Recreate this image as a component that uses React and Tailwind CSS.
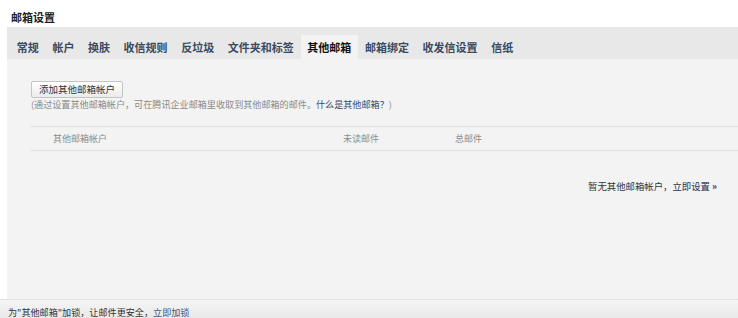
const tabs = ['常规', '帐户', '换肤', '收信规则', '反垃圾', '文件夹和标签', '其他邮箱', '邮箱绑定', '收发信设置', '信纸']

const font = { fontFamily: '"Noto Sans CJK SC", "Noto Sans", sans-serif' }

export default function App() {
  return (
    <div className="h-[318px] w-[738px] overflow-hidden bg-white" style={font}>
      <div className="h-[27px] pl-[11px] pt-[10px] text-[11px] font-bold leading-[14px] text-[#222]">邮箱设置</div>

      {/* tab strip */}
      <div className="ml-[7px] flex h-[32px] bg-[#e8e8e8] pl-[3px] pt-[8px]">
        {tabs.map((t) => (
          <div
            key={t}
            className={`h-[24px] px-[6.8px] text-[11px] font-bold leading-[24px] ${
              t === '其他邮箱' ? 'bg-[#f3f3f3] text-[#111]' : 'text-[#3a4a60]'
            }`}
          >
            {t}
          </div>
        ))}
      </div>

      <div className="ml-[7px] h-[240px] bg-[#f3f3f3] pl-[24px] pt-[22px]">
        <button className="block h-[17px] w-[92px] rounded-[2px] border border-[#c4c4c4] bg-gradient-to-b from-[#ffffff] to-[#ebebeb] text-[9.5px] leading-[15px] text-[#333]">
          添加其他邮箱帐户
        </button>
        <p className="text-[9.1px] leading-[12px] text-[#8a8a8a]">
          (通过设置其他邮箱帐户，可在腾讯企业邮箱里收取到其他邮箱的邮件。
          <span className="text-[#3a4866]">什么是其他邮箱？</span>)
        </p>

        <div className="mt-[16px] flex h-[25px] items-center border-y border-[#dedede] text-[9px] text-[#8c8c8c]">
          <div className="w-[312px] pl-[22px]">其他邮箱帐户</div>
          <div className="w-[112px]">未读邮件</div>
          <div className="flex-1">总邮件</div>
        </div>

        <div className="mt-[29px] pr-[21px] text-right text-[9.4px] leading-[12px] text-[#333]">
          暂无其他邮箱帐户，<span className="text-[#1f2f4f]">立即设置 <b>»</b></span>
        </div>
      </div>

      <div className="h-[19px] border-t border-[#e2e2e2] bg-gradient-to-b from-[#f5f5f5] to-[#e9e9e9] pl-[8px] pt-[6px] text-[9.1px] leading-[12px] text-[#333]">
        为"其他邮箱"加锁，让邮件更安全，<span className="text-[#3a5a8c]">立即加锁</span>
      </div>
    </div>
  )
}
